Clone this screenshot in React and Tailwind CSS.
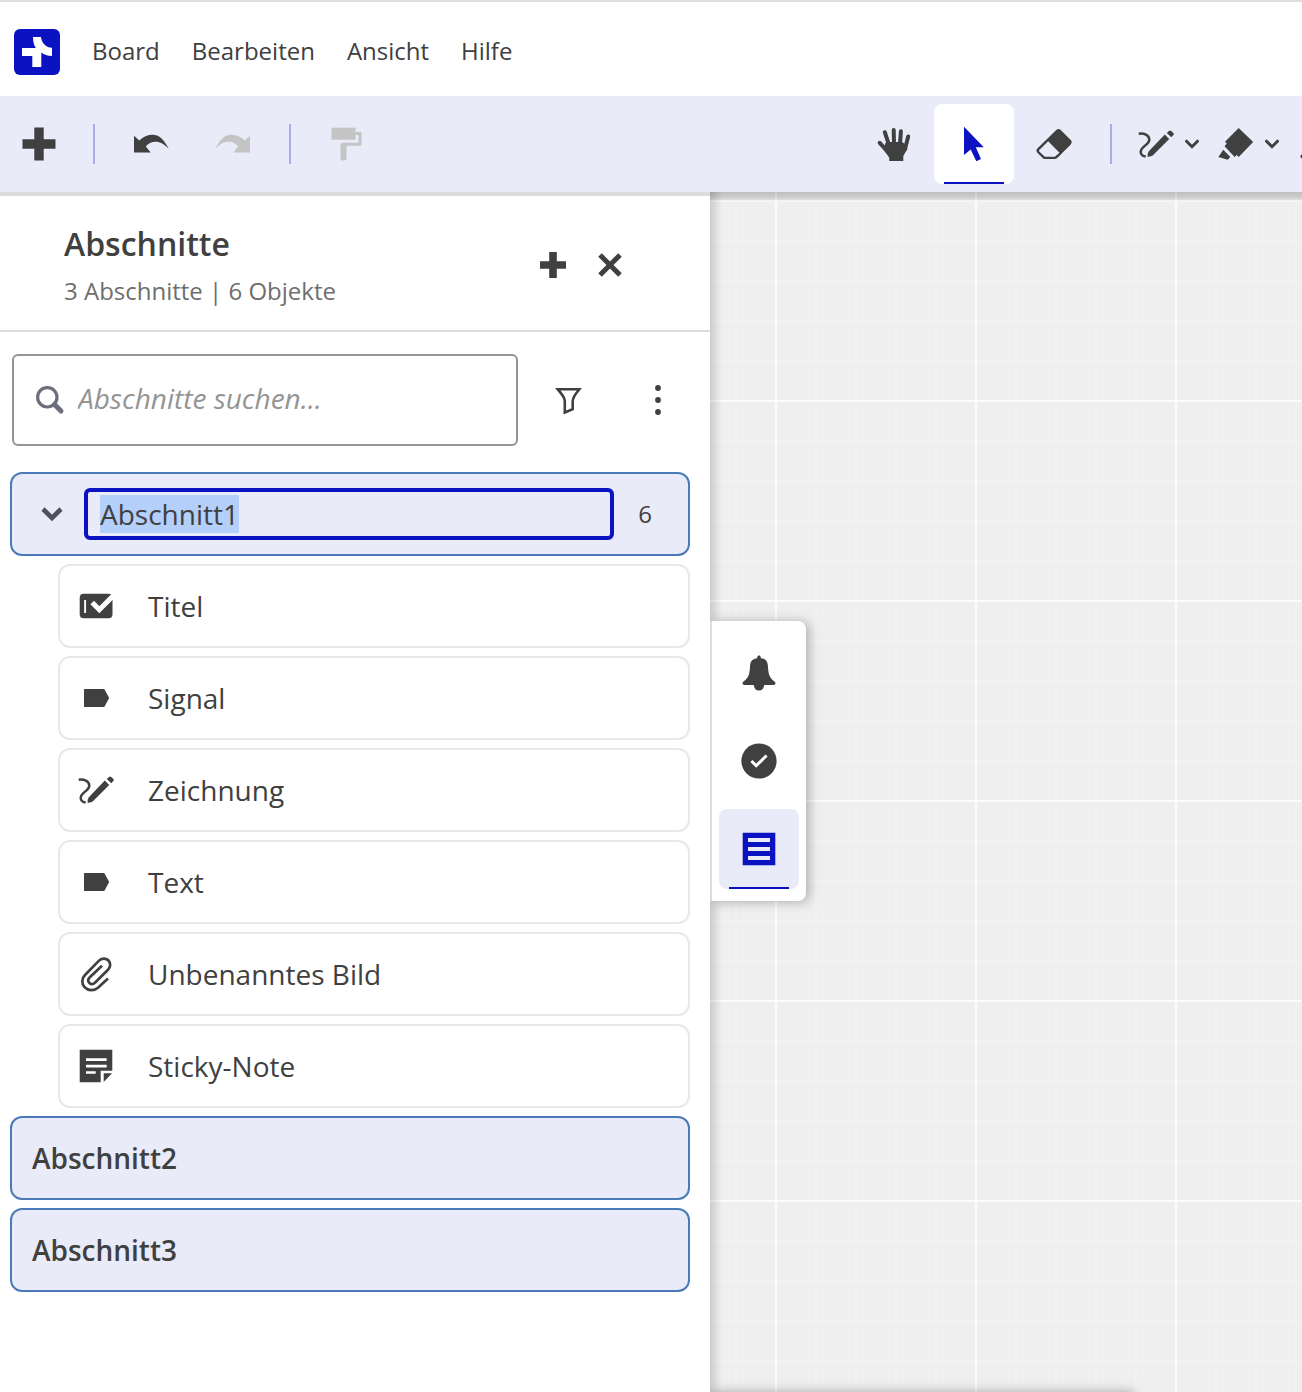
import React, { useEffect, useRef, useState } from 'react';

const MENU = ['Board', 'Bearbeiten', 'Ansicht', 'Hilfe'];

/* Icons are drawn around the origin of a 40x40 box */
function Icon({ children, className = 'size-10', box = '-20 -20 40 40' }) {
  return (
    <svg viewBox={box} className={`shrink-0 ${className}`} fill="currentColor" aria-hidden="true">
      {children}
    </svg>
  );
}

const LogoIcon = () => (
  <svg viewBox="0 0 46 46" className="size-[46px]" aria-hidden="true">
    <rect width="46" height="46" rx="6" fill="#0a12c1" />
    <path
      d="M19 8H27C27.3 12.5 31 18.8 38 18.8V27C33.5 27 30 25.8 27.3 23.5V38H18.3V27H8V19H21.8C20 16.5 19 12.5 19 8Z"
      fill="#fff"
    />
  </svg>
);

const PlusIcon = () => (
  <Icon>
    <path d="M-4.7 -16.5H4.7V-4.7H16.5V4.7H4.7V16.5H-4.7V4.7H-16.5V-4.7H-4.7Z" />
  </Icon>
);

const SmallPlusIcon = () => (
  <Icon>
    <path d="M-3.8 -13H3.8V-3.8H13V3.8H3.8V13H-3.8V3.8H-13V-3.8H-3.8Z" />
  </Icon>
);

const CloseIcon = () => (
  <Icon>
    <path d="M-10 -10L10 10M10 -10L-10 10" stroke="currentColor" strokeWidth="5" />
  </Icon>
);

const UNDO_PATH =
  'M-17 -8.3L-11.7 -3.5C-7 -7.5 -3 -9.2 1.5 -9.2C9 -9.2 13.5 -3 17.7 4.7C13 0 9.5 -2.3 4.5 -2.3C0.5 -2.3 -2.8 -0.5 -5.2 2.5L-0.3 8.5H-17Z';

const UndoIcon = () => (
  <Icon>
    <path d={UNDO_PATH} />
  </Icon>
);

const RedoIcon = () => (
  <Icon className="size-10 -scale-x-100">
    <path d={UNDO_PATH} />
  </Icon>
);

const RollerIcon = () => (
  <Icon>
    <rect x="-15.5" y="-16.3" width="24" height="12" />
    <path d="M8.5 -10.5H13V0.3H-3.5V4" fill="none" stroke="currentColor" strokeWidth="3" strokeLinejoin="round" />
    <rect x="-6.5" y="-1" width="6" height="17.5" rx="2.5" />
  </Icon>
);

const HandIcon = () => (
  <Icon>
    <path
      d="M-9.2 -11.8L-5 1M-0.3 -14L0 0M6.9 -12.8L6 0M14.2 -7.5L11 5M-14.3 -1.2L-6 8"
      fill="none"
      stroke="currentColor"
      strokeWidth="4"
      strokeLinecap="round"
    />
    <path d="M-8 -2H8L12.5 1L13.3 5L9.3 12V17H-4.7V13.8L-11 5Z" />
  </Icon>
);

const PointerIcon = () => (
  <Icon>
    <path d="M-10 -17.3L9.8 3.2H1.8L7 15L2.3 17.2L-3.3 5.5L-10 11Z" />
  </Icon>
);

const EraserIcon = () => (
  <Icon>
    <path
      fillRule="evenodd"
      d="M2.5 -14.2Q4.5 -16 6.5 -14.2L17 -3.7Q18.8 -1.7 17 0.3L3.5 13.8Q2.5 14.9 1 14.9H-9.5Q-10.5 14.9 -11.3 14L-16.9 8.5Q-18.5 6.5 -16.9 4.7ZM-5.8 -2.7L-14.7 5.9Q-15.5 6.7 -14.7 7.5L-9.2 12.8H0.8L5.5 8.7Z"
    />
  </Icon>
);

const DrawIcon = () => (
  <Icon>
    <path
      d="M-17.3 -10.2C-12 -11 -7 -9 -6.7 -4.5C-6.5 0.5 -14.8 2.5 -15.3 7.5C-15.5 10.5 -13 12.4 -10.3 12.3"
      fill="none"
      stroke="currentColor"
      strokeWidth="2.5"
    />
    <path d="M8.8 -9.4L13.2 -5L-3.3 11.6Q-5.3 13 -8.4 12.7Q-8.8 9.7 -7.4 7.4ZM12.9 -12.9Q14 -14.2 15.2 -13.1L17.4 -11.1Q18.4 -10 17.4 -8.9L15.3 -6.8L10.8 -10.9Z" />
  </Icon>
);

const MarkerIcon = () => (
  <Icon>
    <path d="M2.7 -15.9L17.2 -2L2.7 12.9L0.7 11L-1.3 12.9L-11.5 2.3L-9.3 -0.5L-11 -2.3ZM-12.7 5.8L-5.7 12.9L-8.3 15.8L-17.6 13Z" />
  </Icon>
);

const LineIcon = () => (
  <Icon>
    <path d="M-13.5 12.5L14 -13" stroke="currentColor" strokeWidth="4" strokeLinecap="round" />
  </Icon>
);

const ChevronIcon = () => (
  <Icon className="size-4" box="-8 -8 16 16">
    <path
      d="M-5.5 -2.8L0 2.7L5.5 -2.8"
      fill="none"
      stroke="currentColor"
      strokeWidth="3"
      strokeLinecap="round"
    />
  </Icon>
);

const SearchIcon = () => (
  <Icon className="size-10 text-[#6c6e79]">
    <circle cx="-2.7" cy="-2.7" r="9.7" fill="none" stroke="currentColor" strokeWidth="3.2" />
    <path d="M4.5 4.5L11 11" stroke="currentColor" strokeWidth="5" strokeLinecap="round" />
  </Icon>
);

const FilterIcon = () => (
  <Icon>
    <path
      d="M-10.3 -10.8H11.3C8.5 -7 4.7 -3.5 4.7 1.5V9.2L-3.2 12.5V1.5C-3.2 -3.5 -7.5 -7 -10.3 -10.8Z"
      fill="none"
      stroke="currentColor"
      strokeWidth="2.6"
    />
  </Icon>
);

const MoreIcon = () => (
  <Icon>
    <circle cy="-12" r="2.9" />
    <circle r="2.9" />
    <circle cy="12" r="2.9" />
  </Icon>
);

const TitleIcon = () => (
  <Icon>
    <rect x="-16.3" y="-12.3" width="32.8" height="24.5" rx="4" />
    <path d="M-10.9 -6V7" stroke="#fff" strokeWidth="1.9" />
    <path d="M-3.8 -3.5L3.3 3.8L18 -11" fill="none" stroke="#fff" strokeWidth="5" />
  </Icon>
);

const TagIcon = () => (
  <Icon>
    <path d="M-12 -9H8.3L13.2 0L8.3 9H-12Z" />
  </Icon>
);

const ClipIcon = () => (
  <Icon>
    <path
      d="M12 4.5L2 13.7C-2 17.2 -8 16.8 -11.3 13.3C-14.7 9.5 -14.5 4.5 -11 1L2.5 -12.8C5.5 -16.2 10 -16.2 12.5 -13.5C15 -10.8 14.6 -6.8 12 -4.2L-0.8 8.5C-2.7 10.4 -5 10.5 -6.6 9C-8.2 7.3 -8 5 -6.2 3.2L6 -8.3"
      fill="none"
      stroke="currentColor"
      strokeWidth="2.7"
    />
  </Icon>
);

const NoteIcon = () => (
  <Icon>
    <path d="M-16.3 -16.3H16.3V4.7H4.7V16.3H-16.3ZM7.7 7.3H16L7.7 16Z" />
    <path d="M-10 -6.3H10.7M-10 0.2H10.7M-10 6.5H-0.3" stroke="#fff" strokeWidth="2.7" />
  </Icon>
);

const BellIcon = () => (
  <Icon>
    <path d="M-1.8 -14.8V-16Q0 -19.5 1.8 -16V-14.8C6 -14.5 8.6 -12 8.9 -7.5C9.2 1 10.5 5 15.6 8.6C17.3 10.3 16.3 12 14.5 12H5.3C4.6 15.7 3 17.6 0 17.6C-3 17.6 -4.6 15.7 -5.3 12H-14.5C-16.3 12 -17.3 10.3 -15.6 8.6C-10.5 5 -9.2 1 -8.9 -7.5C-8.6 -12 -6 -14.5 -1.8 -14.8Z" />
  </Icon>
);

const CheckIcon = () => (
  <Icon>
    <circle r="17.6" />
    <path d="M-7.6 0L-2.8 4.7L7.6 -5.5" fill="none" stroke="#fff" strokeWidth="3" />
  </Icon>
);

const ListIcon = () => (
  <Icon>
    <path
      fillRule="evenodd"
      d="M-16.3 -16.3H16.3V16.3H-16.3ZM-11 -11V-7H11V-11ZM-11 -2V2H11V-2ZM-11 7V11H11V7Z"
    />
  </Icon>
);

const ITEMS = [
  { name: 'Titel', icon: <TitleIcon /> },
  { name: 'Signal', icon: <TagIcon /> },
  { name: 'Zeichnung', icon: <DrawIcon /> },
  { name: 'Text', icon: <TagIcon /> },
  { name: 'Unbenanntes Bild', icon: <ClipIcon /> },
  { name: 'Sticky-Note', icon: <NoteIcon /> },
];

function ToolButton({ label, active, activeBg = 'bg-white', className = 'w-20', children, ...rest }) {
  return (
    <button
      type="button"
      aria-label={label}
      aria-pressed={active}
      className={`relative flex h-20 shrink-0 items-center justify-center rounded-lg ${className} ${
        active ? `${activeBg} text-[#0a12c1]` : ''
      }`}
      {...rest}
    >
      {children}
      {active && <span className="absolute inset-x-[10px] bottom-0 h-[2px] bg-[#0a12c1]" />}
    </button>
  );
}

const Divider = () => <span className="mx-4 h-10 w-[2px] shrink-0 bg-[#a9ade6]" />;

function Toolbar() {
  return (
    <div className="z-10 flex h-24 items-center overflow-hidden bg-[#e9ebf8]">
      <ToolButton label="Hinzufügen" className="w-[77px]"><PlusIcon /></ToolButton>
      <Divider />
      <div className="flex gap-[2px]">
        <ToolButton label="Rückgängig"><UndoIcon /></ToolButton>
        <ToolButton label="Wiederholen" className="w-20 text-[#c4c4c4]" disabled><RedoIcon /></ToolButton>
      </div>
      <Divider />
      <ToolButton label="Format übertragen" className="w-20 text-[#c4c4c4]" disabled><RollerIcon /></ToolButton>

      <div className="ml-auto flex items-center">
        <ToolButton label="Verschieben"><HandIcon /></ToolButton>
        <ToolButton label="Auswählen" active><PointerIcon /></ToolButton>
        <ToolButton label="Radierer"><EraserIcon /></ToolButton>
        <Divider />
        <ToolButton label="Stift" className="w-20 gap-2"><DrawIcon /><ChevronIcon /></ToolButton>
        <ToolButton label="Textmarker" className="w-20 gap-2"><MarkerIcon /><ChevronIcon /></ToolButton>
        {/* Next tool runs out of the bar */}
        <div className="w-[14px] overflow-hidden">
          <ToolButton label="Linie" className="w-20 gap-2"><LineIcon /><ChevronIcon /></ToolButton>
        </div>
      </div>
    </div>
  );
}

function SectionPanel() {
  const [name, setName] = useState('Abschnitt1');
  const nameRef = useRef(null);

  useEffect(() => {
    nameRef.current.focus();
    nameRef.current.select();
  }, []);

  return (
    <aside className="w-[710px] shrink-0 border-t-4 border-[#dcdcdc] bg-white">
      <div className="flex h-[136px] items-center justify-between border-b-2 border-[#dcdcdc] pt-1 pr-20 pl-16">
        <div className="pt-1">
          <h2 className="text-[32px] leading-[48px] font-semibold">Abschnitte</h2>
          <p className="text-2xl leading-[46px] text-[#6e6e6e]">3 Abschnitte | 6 Objekte</p>
        </div>
        <div className="flex gap-[17px]">
          <button type="button" aria-label="Abschnitt hinzufügen"><SmallPlusIcon /></button>
          <button type="button" aria-label="Schließen"><CloseIcon /></button>
        </div>
      </div>

      <div className="flex items-center pt-[22px] pr-8 pl-3">
        <label className="flex h-[92px] flex-1 items-center gap-2 rounded-md border-2 border-[#949494] px-4">
          <SearchIcon />
          <input
            type="search"
            aria-label="Abschnitte suchen"
            placeholder="Abschnitte suchen..."
            className="w-full min-w-0 bg-transparent pb-1 text-[28px] leading-[38px] outline-none placeholder:text-[#949494] placeholder:italic"
          />
        </label>
        <button type="button" aria-label="Filter" className="ml-[30px]"><FilterIcon /></button>
        <button type="button" aria-label="Mehr" className="ml-[50px]"><MoreIcon /></button>
      </div>

      <ul className="flex flex-col gap-2 pt-[26px] pr-5 pb-25 pl-[10px] text-[28px] leading-[38px]">
        <li className="flex h-[84px] items-center rounded-xl border-2 border-[#4a7ab8] bg-[#e9ebf8] pr-9 pl-5">
          <button type="button" aria-label="Zuklappen" className="mr-3 text-[#4f515c]">
            <Icon>
              <path d="M-9 -5L0 4L9 -5" fill="none" stroke="currentColor" strokeWidth="4.6" />
            </Icon>
          </button>
          <input
            ref={nameRef}
            type="text"
            aria-label="Name des Abschnitts"
            value={name}
            onChange={(e) => setName(e.target.value)}
            className="h-[52px] min-w-0 flex-1 rounded-md border-4 border-[#0a12c1] bg-transparent px-3 outline-none selection:bg-[#b3cffa] selection:text-[#404040]"
          />
          <span className="ml-6 text-2xl">6</span>
        </li>
        {ITEMS.map((item) => (
          <li
            key={item.name}
            className="ml-12 flex h-[84px] items-center gap-8 rounded-xl border-2 border-[#e8e8e8] bg-white px-4"
          >
            {item.icon}
            {item.name}
          </li>
        ))}
        {['Abschnitt2', 'Abschnitt3'].map((section) => (
          <li
            key={section}
            className="flex h-[84px] items-center rounded-xl border-2 border-[#4a7ab8] bg-[#e9ebf8] px-5 font-semibold"
          >
            {section}
          </li>
        ))}
      </ul>
    </aside>
  );
}

function Canvas() {
  return (
    <main className="relative flex-1 overflow-hidden bg-[#efefef] bg-[linear-gradient(to_right,#fcfcfc_2px,transparent_2px),linear-gradient(to_bottom,#fcfcfc_2px,transparent_2px),linear-gradient(to_right,#f2f2f2_2px,transparent_2px),linear-gradient(to_bottom,#f2f2f2_2px,transparent_2px)] bg-[size:200px_200px,200px_200px,40px_40px,40px_40px] bg-[position:65px_8px,65px_8px,25px_8px,25px_8px]">
      {/* Shadows thrown by the toolbar and the section panel */}
      <div className="absolute inset-y-0 left-0 w-3 bg-linear-to-r from-black/15 to-transparent" />
      <div className="absolute inset-x-0 top-0 h-[10px] bg-linear-to-b from-black/20 via-black/15 to-transparent" />

      <nav className="absolute top-[429px] left-0 flex flex-col gap-2 rounded-r-lg border-l-2 border-[#dcdcdc] bg-white px-[7px] py-3 shadow-[3px_1px_12px_rgba(0,0,0,0.28)]">
        <ToolButton label="Benachrichtigungen"><BellIcon /></ToolButton>
        <ToolButton label="Aufgaben"><CheckIcon /></ToolButton>
        <ToolButton label="Abschnitte" active activeBg="bg-[#e9ebf8]"><ListIcon /></ToolButton>
      </nav>

      <div className="absolute top-full left-0 h-12 w-[426px] rounded-lg bg-white shadow-[0_0_12px_rgba(0,0,0,0.3)]" />
    </main>
  );
}

export default function App() {
  return (
    <div className="flex min-h-screen flex-col bg-white font-['Open_Sans','Noto_Sans',sans-serif] text-[#404040]">
      <header className="flex h-24 items-center border-t-2 border-[#e0e0e0] px-[14px] pt-[6px]">
        <a href="#" aria-label="Startseite"><LogoIcon /></a>
        <nav className="ml-8 flex gap-8 pb-[2px] text-2xl">
          {MENU.map((entry) => (
            <button key={entry} type="button">{entry}</button>
          ))}
        </nav>
      </header>
      <Toolbar />
      <div className="flex flex-1">
        <SectionPanel />
        <Canvas />
      </div>
    </div>
  );
}
